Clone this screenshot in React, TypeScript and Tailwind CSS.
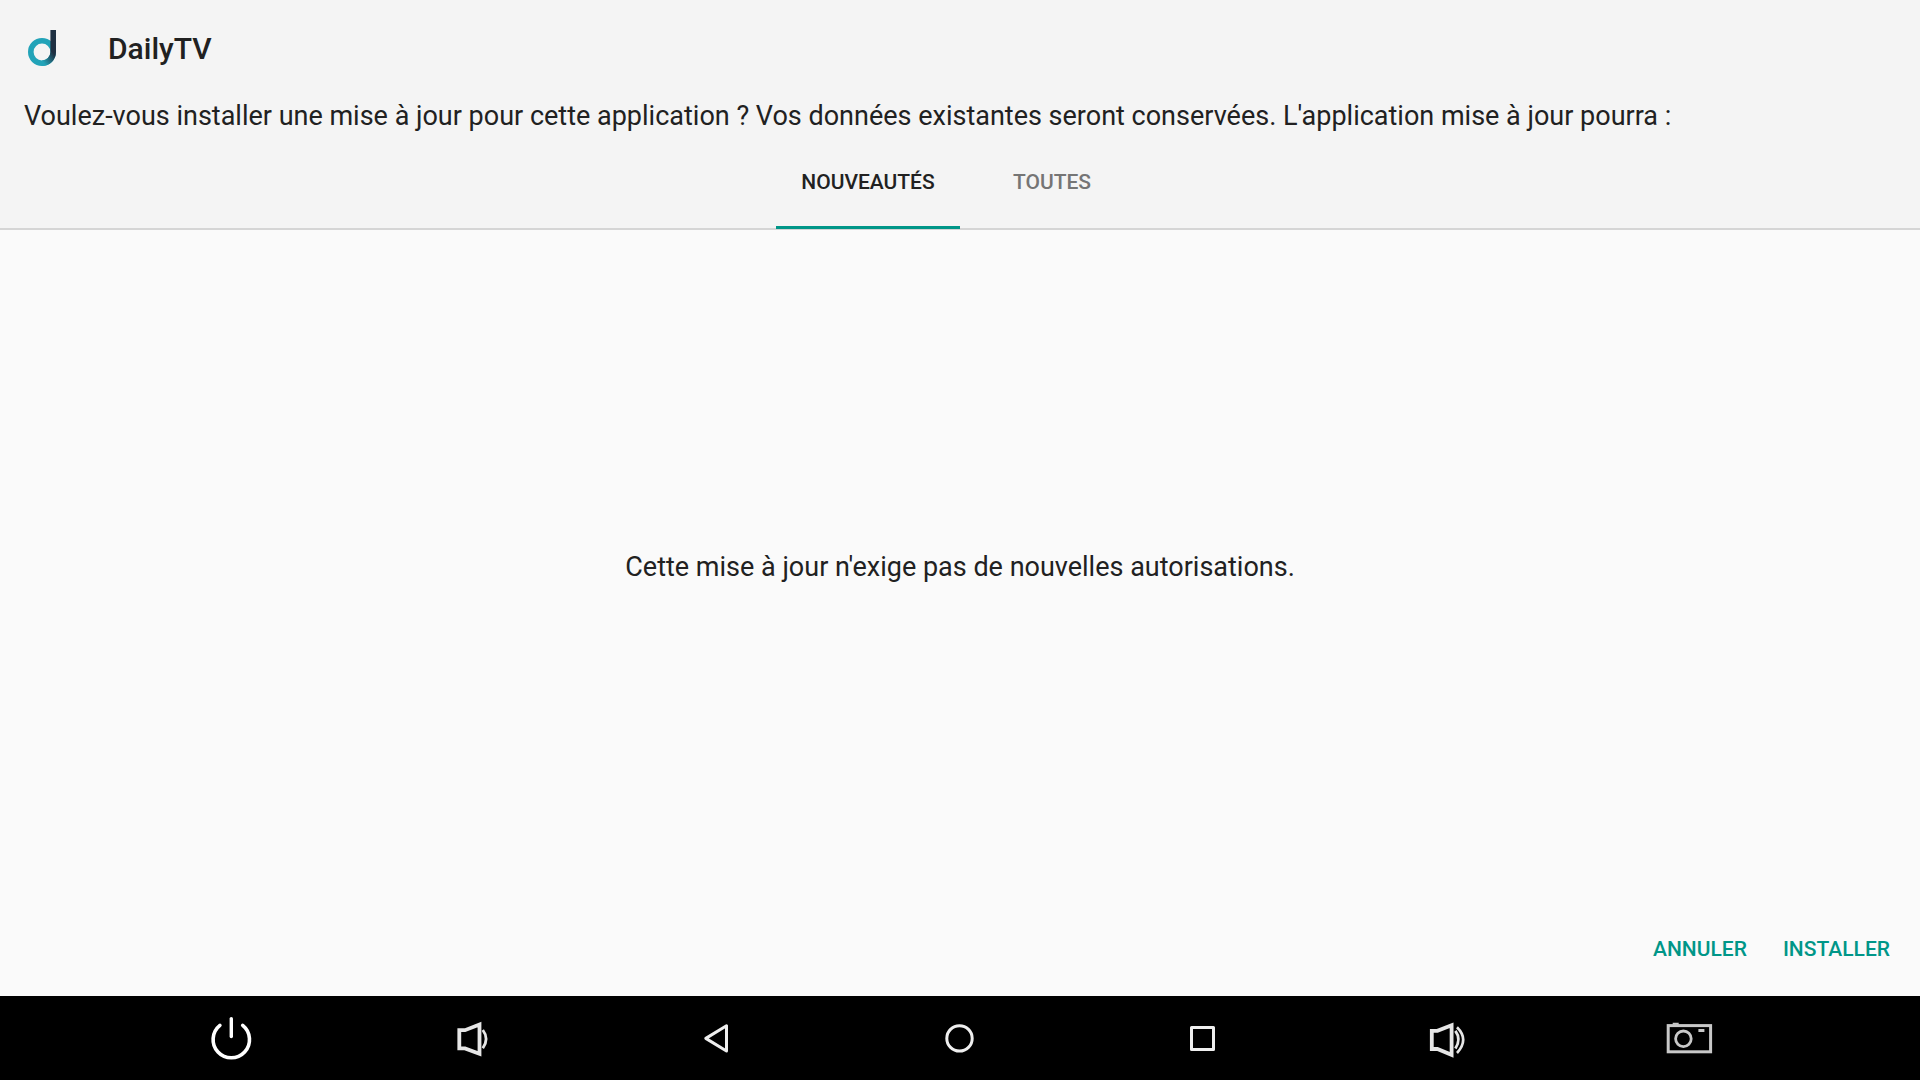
import { useState, type ReactNode } from 'react';

interface NavItem {
  label: string;
  icon: ReactNode;
}

const tabs = ['Nouveautés', 'Toutes'];

const navItems: NavItem[] = [
  {
    label: 'Marche/Arrêt',
    icon: (
      <g stroke="#fff" strokeLinecap="round">
        <path d="M24.3 4.6v18" strokeWidth="3.4" />
        <path d="M12.9 11.4A18.2 18.2 0 1 0 35.7 11.4" strokeWidth="3.6" />
      </g>
    ),
  },
  {
    label: 'Baisser le volume',
    icon: (
      <g stroke="#e6e6e6" strokeWidth="3">
        <path d="M9.3 16.2H15L29.5 10.6V39.8L15 34.4H9.3Z" strokeWidth="3.8" />
        <path d="M32.8 16Q39.4 24.8 32.8 34.2" strokeWidth="2.8" />
      </g>
    ),
  },
  {
    label: 'Retour',
    icon: <path d="M12.8 24.4L33.5 11.8V37Z" stroke="#efefef" strokeWidth="3" strokeLinejoin="round" />,
  },
  {
    label: 'Accueil',
    icon: <circle cx="23.5" cy="24.4" r="12.7" stroke="#efefef" strokeWidth="3" />,
  },
  {
    label: 'Applications récentes',
    icon: <rect x="12.5" y="13.5" width="22" height="22" stroke="#efefef" strokeWidth="3" strokeLinejoin="round" />,
  },
  {
    label: 'Augmenter le volume',
    icon: (
      <g stroke="#e6e6e6">
        <path d="M9.8 16.8H15.4L29.6 11.2V40.8L15.4 35H9.8Z" strokeWidth="3.8" />
        <path d="M33.4 16.8Q39.4 25 33.4 34.6" strokeWidth="2.8" />
        <path d="M35 13.2Q47.4 25.4 35 39" strokeWidth="2.6" />
      </g>
    ),
  },
  {
    label: "Capture d'écran",
    icon: (
      <g stroke="#c8c8c8" strokeWidth="3">
        <rect x="3.2" y="11.6" width="42.4" height="26.2" />
        <circle cx="18.4" cy="24.8" r="7.8" strokeWidth="2.8" />
        <path d="M7.7 8.8h6v2h-6zM33.4 14.9h6v3.2h-6z" fill="#c8c8c8" stroke="none" />
      </g>
    ),
  },
];

function Logo() {
  return (
    <svg width="28" height="36" viewBox="0 0 28 36" fill="none" aria-hidden="true">
      <defs>
        <linearGradient id="ring" gradientUnits="userSpaceOnUse" x1="15" y1="32" x2="26" y2="24">
          <stop offset="0" stopColor="#22a3b8" />
          <stop offset="1" stopColor="#1f3042" />
        </linearGradient>
      </defs>
      <circle cx="14" cy="22" r="11.2" stroke="#22a3b8" strokeWidth="5.6" />
      <path d="M25.2 22A11.2 11.2 0 0 1 14 33.2" stroke="url(#ring)" strokeWidth="5.6" />
      <path d="M22.4 0H28V22H22.4Z" fill="#1f3042" />
    </svg>
  );
}

export default function App() {
  const [activeTab, setActiveTab] = useState(tabs[0]);

  return (
    <div className="flex min-h-screen flex-col bg-[#fafafa] font-[Roboto,sans-serif] text-[#212121]">
      <header className="border-b-2 border-[#d5d5d5] bg-[#f4f4f4]">
        <div className="flex h-24 items-center gap-[52px] px-7">
          <Logo />
          <h1 className="pt-0.5 text-[30px] font-medium leading-9">DailyTV</h1>
        </div>
        <p className="px-6 text-[27px] leading-10">
          Voulez-vous installer une mise à jour pour cette application ? Vos données existantes seront conservées.
          L'application mise à jour pourra :
        </p>
        <div role="tablist" className="-mb-px flex justify-center">
          {tabs.map((tab) => (
            <button
              key={tab}
              role="tab"
              aria-selected={tab === activeTab}
              onClick={() => setActiveTab(tab)}
              className={`h-[93px] w-[184px] border-b-3 pt-0.5 text-[21px] font-medium uppercase leading-6 ${
                tab === activeTab ? 'border-[#009688]' : 'border-transparent text-[#757575]'
              }`}
            >
              {tab}
            </button>
          ))}
        </div>
      </header>

      <main className="flex flex-1 items-center justify-center pb-2">
        <p className="text-[27px] leading-8">Cette mise à jour n'exige pas de nouvelles autorisations.</p>
      </main>

      <div className="flex justify-end gap-3 px-[18px] pb-3 text-[21px] font-medium leading-6 text-[#009688]">
        <button className="h-[72px] px-3 pt-0.5 uppercase">Annuler</button>
        <button className="h-[72px] px-3 pt-0.5 uppercase">Installer</button>
      </div>

      <nav className="flex h-21 bg-black px-[110px]">
        {navItems.map((item) => (
          <button key={item.label} aria-label={item.label} className="flex flex-1 items-center justify-center">
            <svg width="48" height="48" viewBox="0 0 48 48" fill="none">
              {item.icon}
            </svg>
          </button>
        ))}
      </nav>
    </div>
  );
}
